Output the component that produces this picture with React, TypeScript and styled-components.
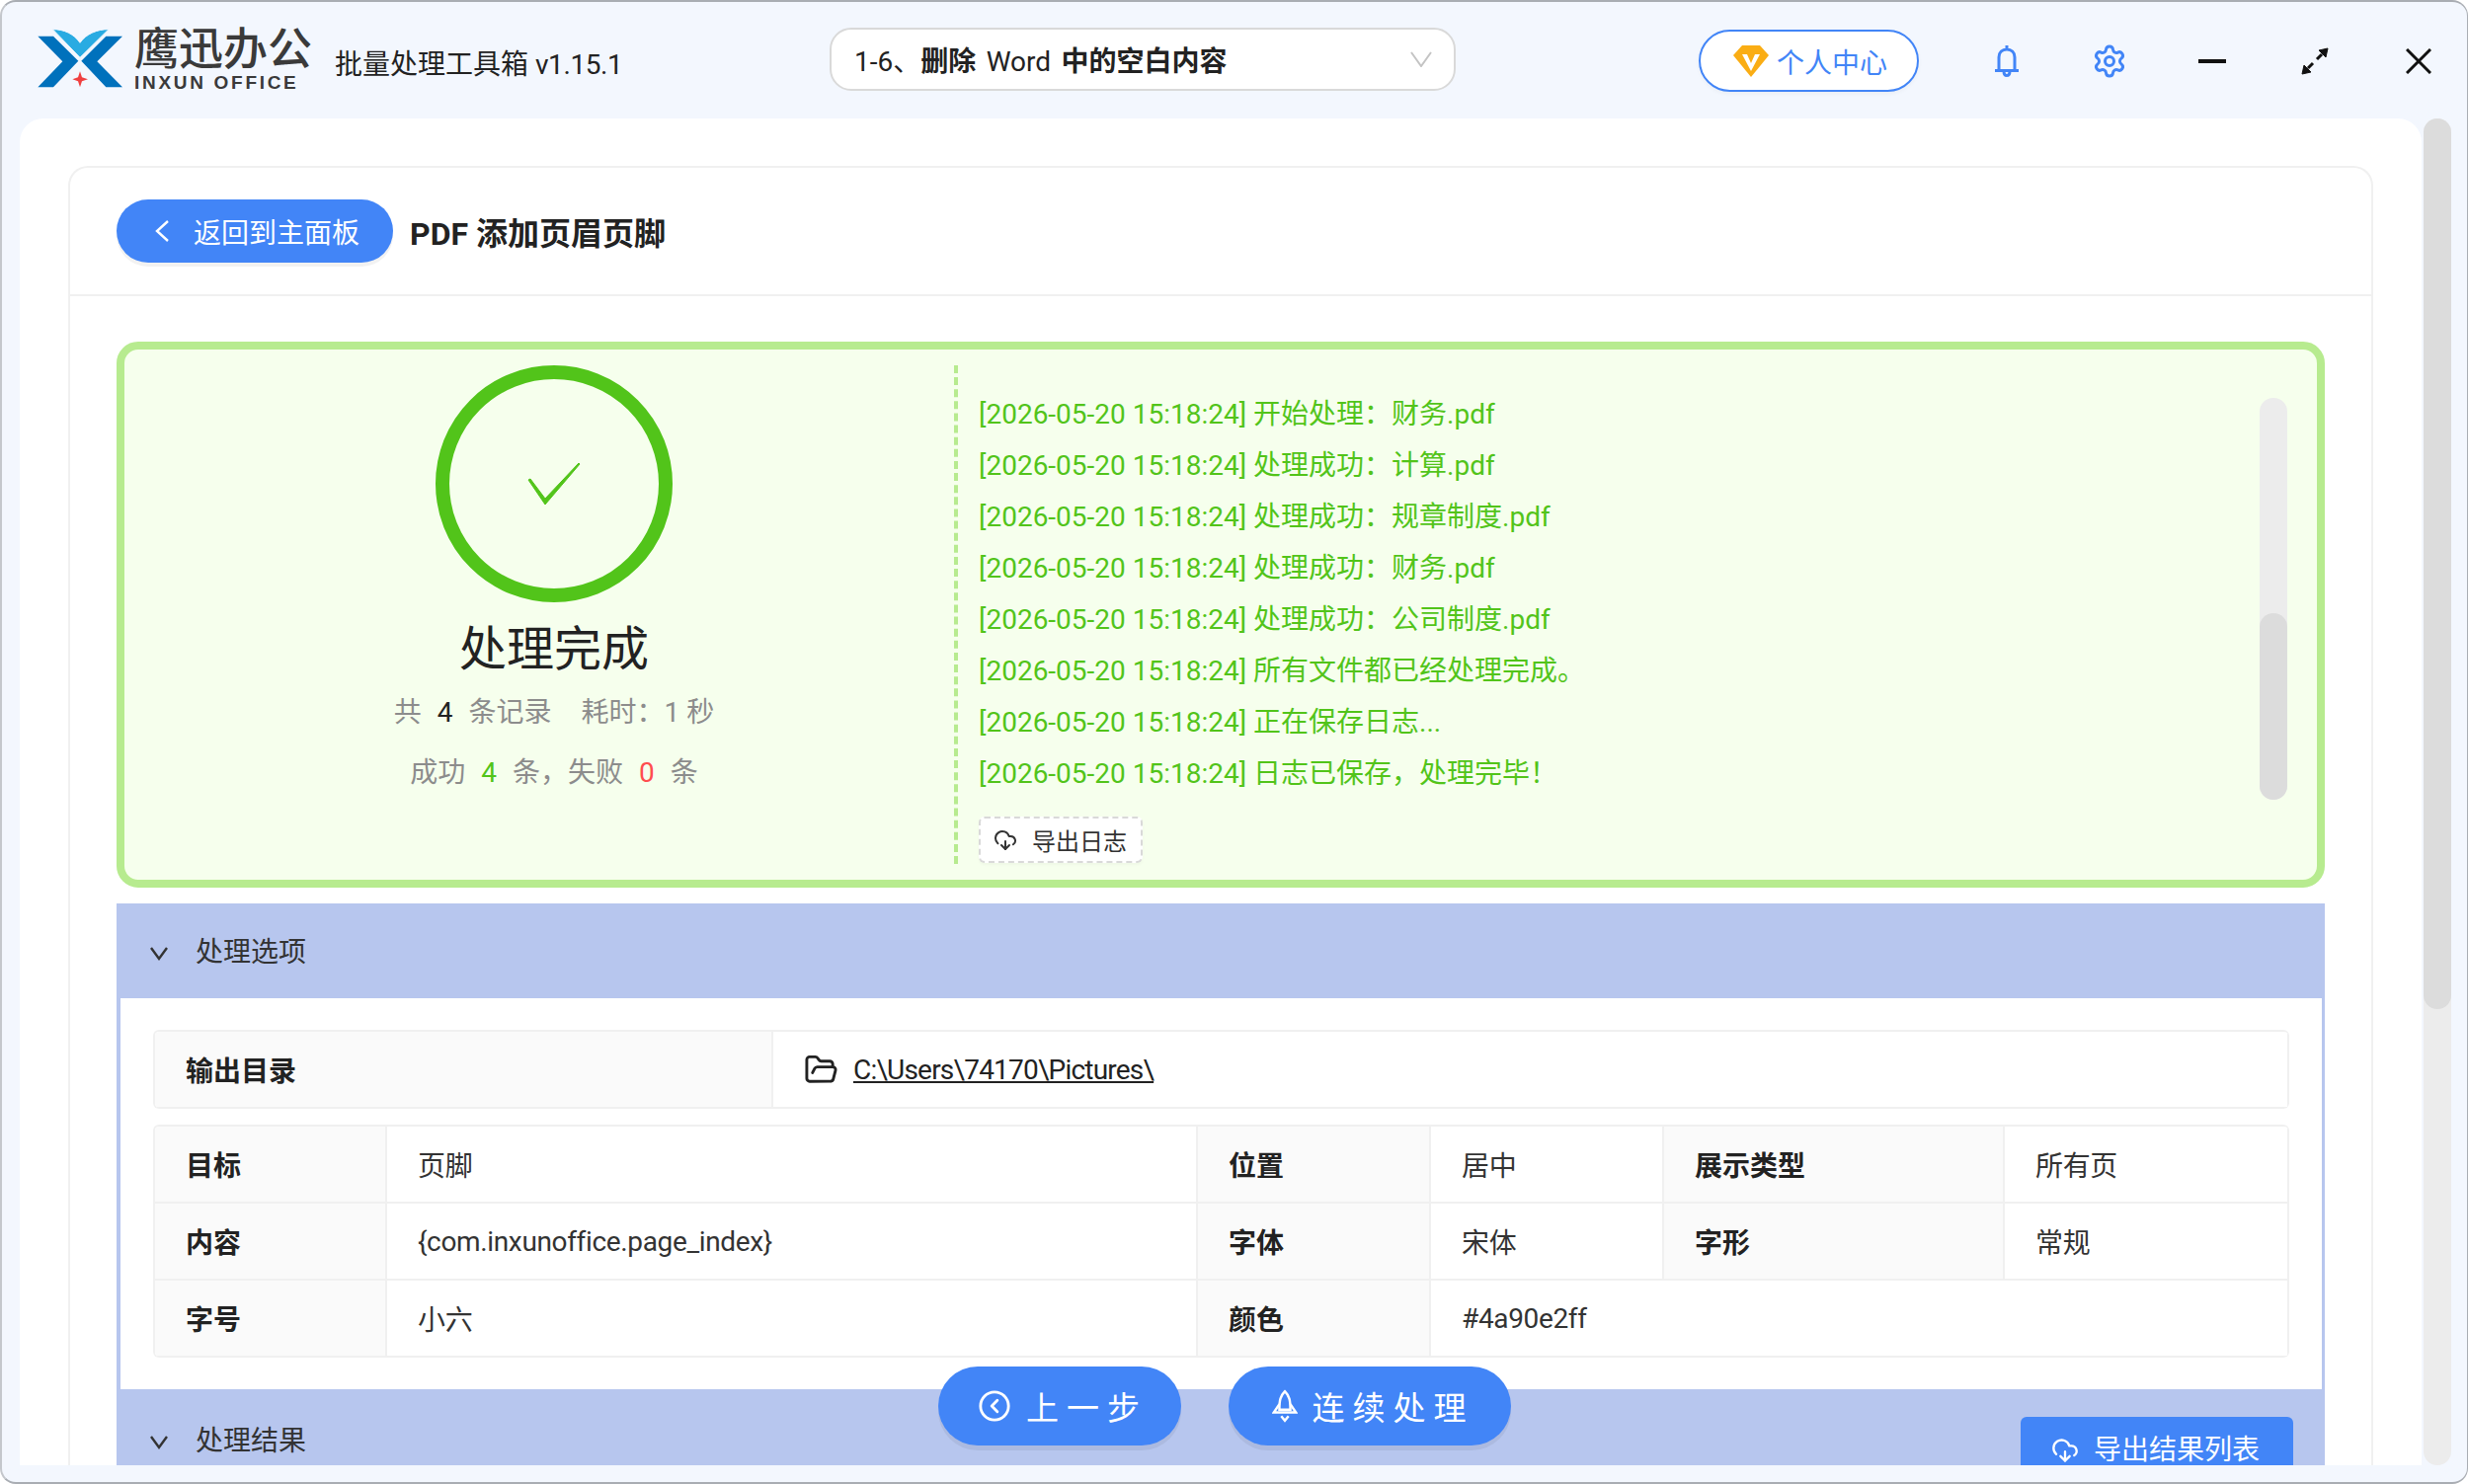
import React from "react";
import styled, { createGlobalStyle } from "styled-components";
import { CircleChevronLeft, CloudDownload, FolderOpen, Settings } from "lucide-react";

const FONT = `Roboto, "Noto Sans CJK SC", "Noto Sans", sans-serif`;
const BLUE = "#4285f7";
const GREEN = "#52c41a";
const LINE = "#f0f0f0";
const SECTION = "#b7c6ee";

const Global = createGlobalStyle`
  * { box-sizing: border-box; }
  html, body { margin: 0; padding: 0; background: #ffffff; }
  body { font-family: ${FONT}; font-size: 28px; color: #222; overflow: hidden; }
`;

const Frame = styled.div`
  width: 2499px;
  height: 1503px;
  background: #f3f7fe;
  border-top: 2px solid #a9adb3;
  border-left: 2px solid #c4c7cc;
  border-right: 1px solid #a9adb3;
  border-bottom: 2px solid #a9adb3;
  border-radius: 16px;
  overflow: hidden;
  display: flex;
  flex-direction: column;
`;

const Header = styled.header`
  height: 118px;
  flex: none;
  display: flex;
  align-items: center;
  padding-left: 35px;
  position: relative;
`;

const Brand = styled.div`
  display: flex;
  align-items: center;
  width: 803px;
  flex: none;
`;

const LogoMark = styled.svg`
  width: 100px;
  height: 70px;
  flex: none;
  margin-left: -7px;
  margin-top: -2px;
`;

const LogoText = styled.div`
  display: flex;
  flex-direction: column;
  margin-left: 6px;
  width: 203px;
  flex: none;
`;

const LogoCn = styled.div`
  font-size: 45px;
  line-height: 44px;
  font-weight: 500;
  color: #3a3a3a;
  white-space: nowrap;
`;

const LogoEn = styled.div`
  font-family: "Liberation Sans", sans-serif;
  font-size: 19px;
  line-height: 18px;
  font-weight: 700;
  color: #3a3a3a;
  letter-spacing: 2.7px;
  white-space: nowrap;
  margin-top: 2px;
`;

const Version = styled.div`
  font-size: 28px;
  line-height: 40px;
  color: #222;
  margin-top: 10px;
  white-space: nowrap;
`;

const VersionNo = styled.span`
  letter-spacing: -0.4px;
`;

const TaskSelect = styled.div`
  width: 634px;
  height: 64px;
  flex: none;
  background: #fff;
  border: 2px solid #d9d9d9;
  border-radius: 22px;
  display: flex;
  align-items: center;
  justify-content: space-between;
  padding: 0 22px 0 23px;
  font-size: 28px;
  word-spacing: 3.5px;
  margin-top: -2px;
`;

const TaskCjk = styled.span`
  font-weight: 700;
`;

const RightBar = styled.div`
  display: flex;
  align-items: center;
  margin-left: 246px;
  margin-top: 1px;
`;

const ProfileButton = styled.div`
  width: 223px;
  height: 63px;
  border: 2px solid ${BLUE};
  border-radius: 32px;
  background: #fff;
  color: ${BLUE};
  display: flex;
  align-items: center;
  padding-left: 33px;
  gap: 8px;
  font-size: 28px;
  box-shadow: 0 2px 4px rgba(0, 0, 0, 0.04);
`;

const IconSlot = styled.div<{ $w: number; $ml: number }>`
  width: ${(p) => p.$w}px;
  margin-left: ${(p) => p.$ml}px;
  display: flex;
  justify-content: center;
  align-items: center;
  flex: none;
`;

const Body = styled.div`
  flex: none;
  height: 1364px;
  display: flex;
  padding-left: 18px;
`;

const Panel = styled.main`
  width: 2432px;
  height: 100%;
  flex: none;
  background: #fff;
  border-radius: 24px 24px 0 0;
  padding: 48px 49px 0;
  overflow: hidden;
  position: relative;
`;

const Card = styled.section`
  border: 2px solid ${LINE};
  border-bottom: none;
  border-radius: 20px 20px 0 0;
  height: 1400px;
`;

const CardHead = styled.div`
  height: 130px;
  border-bottom: 2px solid ${LINE};
  display: flex;
  align-items: center;
  padding: 0 0 0 47px;
`;

const BackButton = styled.div`
  width: 280px;
  height: 64px;
  background: ${BLUE};
  border-radius: 32px;
  color: #fff;
  display: flex;
  align-items: center;
  padding-left: 38px;
  gap: 24px;
  font-size: 28px;
  box-shadow: 0 4px 0 #f2f2f2;
`;

const PageTitle = styled.h1`
  margin: 0 0 0 17px;
  font-size: 32px;
  font-weight: 700;
  color: #222;
`;

const CardBody = styled.div`
  padding: 46px 47px 0;
`;

const ResultBox = styled.div`
  height: 553px;
  background: #f6ffed;
  border: 8px solid #b7eb8f;
  border-radius: 22px;
  display: flex;
  padding: 16px 0;
`;

const SummaryCol = styled.div`
  width: 842px;
  flex: none;
  padding-left: 28px;
  display: flex;
  flex-direction: column;
  align-items: center;
`;

const Ring = styled.div`
  width: 240px;
  height: 240px;
  flex: none;
  border: 14px solid ${GREEN};
  border-radius: 50%;
  display: flex;
  align-items: center;
  justify-content: center;
`;

const DoneTitle = styled.div`
  margin-top: 12px;
  font-size: 48px;
  line-height: 72px;
  color: #222;
`;

const StatLine = styled.div<{ $mt: number }>`
  margin-top: ${(p) => p.$mt}px;
  font-size: 28px;
  line-height: 56px;
  color: #8c8c8c;
  white-space: nowrap;
`;

const Num = styled.span<{ $color: string }>`
  color: ${(p) => p.$color};
  margin: 0 16px;
`;

const Gap = styled.span`
  display: inline-block;
  width: 30px;
`;

const LogCol = styled.div`
  flex: 1;
  min-width: 0;
  border-left: 4px dashed #b7eb8f;
  margin-left: -2px;
  padding: 24px 30px 0 21px;
  display: flex;
  justify-content: space-between;
`;

const LogList = styled.div`
  display: flex;
  flex-direction: column;
  align-items: flex-start;
`;

const LogLine = styled.div`
  font-size: 28px;
  line-height: 52px;
  color: ${GREEN};
  white-space: nowrap;
`;

const ExportLog = styled.div`
  margin-top: 17px;
  width: 166px;
  height: 47px;
  border: 2px dashed #d9d9d9;
  border-radius: 6px;
  background: #fff;
  display: flex;
  align-items: center;
  padding-left: 13px;
  gap: 15px;
  font-size: 24px;
  color: #333;
  box-shadow: 0 2px 3px rgba(0, 0, 0, 0.03);
`;

const Track = styled.div`
  width: 28px;
  height: 407px;
  margin-top: 9px;
  background: #ececec;
  border-radius: 14px;
  position: relative;
  flex: none;
`;

const Thumb = styled.div<{ $top: number }>`
  position: absolute;
  left: 0;
  right: 0;
  top: ${(p) => p.$top}px;
  bottom: 0;
  background: #dcdcdc;
  border-radius: 14px;
`;

const SectionHead = styled.div<{ $top: number; $pad: number }>`
  margin-top: ${(p) => p.$top}px;
  height: 96px;
  background: ${SECTION};
  display: flex;
  align-items: flex-start;
  padding: ${(p) => p.$pad}px 21px 0 33px;
  font-size: 28px;
  line-height: 46px;
  color: #333;
  position: relative;
`;

const SectionIcon = styled.svg`
  width: 20px;
  height: 46px;
  margin-right: 27px;
  flex: none;
`;

const SectionBody = styled.div`
  border-left: 4px solid ${SECTION};
  border-right: 3px solid ${SECTION};
  padding: 32px 33px 32px 33px;
  background: #fff;
`;

const Table = styled.div<{ $cols: string; $mt?: number }>`
  display: grid;
  grid-template-columns: ${(p) => p.$cols};
  grid-auto-rows: 78px;
  margin-top: ${(p) => p.$mt ?? 0}px;
  border-top: 2px solid ${LINE};
  border-left: 2px solid ${LINE};
  border-radius: 6px;
  font-size: 28px;
  overflow: hidden;
`;

const Label = styled.div`
  background: #fafafa;
  font-weight: 700;
  display: flex;
  align-items: center;
  padding-left: 31px;
  border-right: 2px solid ${LINE};
  border-bottom: 2px solid ${LINE};
  color: #222;
`;

const Value = styled.div<{ $span?: number }>`
  grid-column: span ${(p) => p.$span ?? 1};
  display: flex;
  align-items: center;
  padding-left: 31px;
  border-right: 2px solid ${LINE};
  border-bottom: 2px solid ${LINE};
  color: #333;
  gap: 15px;
  letter-spacing: -0.35px;
`;

const PathLink = styled.span`
  text-decoration: underline;
  color: #222;
  letter-spacing: -0.8px;
`;

const ExportResults = styled.div`
  position: absolute;
  right: 32px;
  top: 28px;
  width: 276px;
  height: 68px;
  background: ${BLUE};
  border-radius: 6px;
  color: #fff;
  font-size: 28px;
  display: flex;
  align-items: center;
  padding-left: 31px;
  gap: 15px;
`;

const ActionBar = styled.div`
  position: absolute;
  left: 930px;
  top: 1264px;
  display: flex;
  gap: 48px;
`;

const ActionButton = styled.div<{ $w: number }>`
  width: ${(p) => p.$w}px;
  height: 80px;
  background: ${BLUE};
  border-radius: 40px;
  color: #fff;
  display: flex;
  align-items: center;
  justify-content: center;
  gap: 15px;
  padding-left: 6px;
  font-size: 33px;
  letter-spacing: 8px;
  box-shadow: 0 5px 0 rgba(0, 0, 0, 0.06);
`;

const PageScroll = styled.div`
  width: 28px;
  height: 100%;
  flex: none;
  margin-left: 2px;
  background: #ececec;
  border-radius: 14px;
  position: relative;
`;

const PageThumb = styled.div`
  position: absolute;
  left: 0;
  right: 0;
  top: 0;
  height: 902px;
  background: #dcdcdc;
  border-radius: 14px;
`;

const logs = [
  "开始处理：财务.pdf",
  "处理成功：计算.pdf",
  "处理成功：规章制度.pdf",
  "处理成功：财务.pdf",
  "处理成功：公司制度.pdf",
  "所有文件都已经处理完成。",
  "正在保存日志...",
  "日志已保存，处理完毕！",
];

const Chevron = () => (
  <SectionIcon viewBox="0 0 20 46">
    <path d="M2 18 L10 29 L18 18" fill="none" stroke="#333" strokeWidth="2.4" />
  </SectionIcon>
);

export default function App() {
  return (
    <>
      <Global />
      <Frame>
        <Header>
          <Brand>
            <LogoMark viewBox="0 0 300 210">
              <path d="M25 35H72L148 110L72 190H25L100 112Z" fill="#0071bc" />
              <path d="M282 35H232L157 110L232 190H282L205 112Z" fill="#0071bc" />
              <path d="M70 14C105 14 135 28 153 55C171 28 205 14 240 14L153 100Z" fill="#29abe2" stroke="#f3f7fe" strokeWidth="3" />
              <path d="M153 142L159 160L177 166L159 172L153 190L147 172L130 166L147 160Z" fill="#f04040" />
            </LogoMark>
            <LogoText>
              <LogoCn>鹰迅办公</LogoCn>
              <LogoEn>INXUN OFFICE</LogoEn>
            </LogoText>
            <Version>
              批量处理工具箱 <VersionNo>v1.15.1</VersionNo>
            </Version>
          </Brand>
          <TaskSelect>
            <span>
              1-6、<TaskCjk>删除</TaskCjk> Word <TaskCjk>中的空白内容</TaskCjk>
            </span>
            <svg width="22" height="16" viewBox="0 0 22 16">
              <path d="M1 1L11 15L21 1" fill="none" stroke="#c4c4c4" strokeWidth="2" />
            </svg>
          </TaskSelect>
          <RightBar>
            <ProfileButton>
              <svg width="36" height="32" viewBox="0 0 36 32">
                <path d="M9 0H27L36 10L18 32L0 10Z" fill="#faad14" />
                <path d="M9 9H14L18 18L22 9H27L18 26Z" fill="#fff" />
              </svg>
              个人中心
            </ProfileButton>
            <IconSlot $w={26} $ml={76}>
              <svg width="26" height="34" viewBox="0 0 26 34">
                <path d="M13 1V5M5 26V13C5 8 8.5 5 13 5C17.500 5 21 8 21 13V26M1 26.500H25M10 27C10 33 16 33 16 27" fill="none" stroke={BLUE} strokeWidth="3" />
              </svg>
            </IconSlot>
            <IconSlot $w={36} $ml={73}>
              <Settings size={36} color={BLUE} strokeWidth={2} />
            </IconSlot>
            <IconSlot $w={28} $ml={72}>
              <svg width="28" height="4" viewBox="0 0 28 4">
                <rect width="28" height="4" fill="#111" />
              </svg>
            </IconSlot>
            <IconSlot $w={28} $ml={76}>
              <svg width="28" height="28" viewBox="0 0 28 28">
                <path d="M27 1L18 3L25 10ZM1 27L10 25L3 18Z" fill="#111" stroke="#111" />
                <path d="M21 7L16 12M7 21L12 16" stroke="#111" strokeWidth="3" />
              </svg>
            </IconSlot>
            <IconSlot $w={26} $ml={78}>
              <svg width="26" height="26" viewBox="0 0 26 26">
                <path d="M1 1L25 25M25 1L1 25" stroke="#111" strokeWidth="3" />
              </svg>
            </IconSlot>
          </RightBar>
        </Header>
        <Body>
          <Panel>
            <Card>
              <CardHead>
                <BackButton>
                  <svg width="16" height="24" viewBox="0 0 16 24">
                    <path d="M14 2L3 12L14 22" fill="none" stroke="#fff" strokeWidth="2.4" />
                  </svg>
                  返回到主面板
                </BackButton>
                <PageTitle>PDF 添加页眉页脚</PageTitle>
              </CardHead>
              <CardBody>
                <ResultBox>
                  <SummaryCol>
                    <Ring>
                      <svg width="54" height="44" viewBox="0 0 54 44">
                        <path d="M1 18L3 17L18 37L52 1L53 2L18 43Z" fill={GREEN} stroke={GREEN} strokeWidth="1" />
                      </svg>
                    </Ring>
                    <DoneTitle>处理完成</DoneTitle>
                    <StatLine $mt={0}>
                      共<Num $color="#222">4</Num>条记录<Gap />耗时：1 秒
                    </StatLine>
                    <StatLine $mt={5}>
                      成功<Num $color={GREEN}>4</Num>条，失败<Num $color="#ff4d4f">0</Num>条
                    </StatLine>
                  </SummaryCol>
                  <LogCol>
                    <LogList>
                      {logs.map((t, i) => (
                        <LogLine key={i}>[2026-05-20 15:18:24] {t}</LogLine>
                      ))}
                      <ExportLog>
                        <CloudDownload size={24} color="#333" strokeWidth={2} />
                        导出日志
                      </ExportLog>
                    </LogList>
                    <Track>
                      <Thumb $top={218} />
                    </Track>
                  </LogCol>
                </ResultBox>
                <SectionHead $top={16} $pad={27}>
                  <Chevron />
                  处理选项
                </SectionHead>
                <SectionBody>
                  <Table $cols="626px 1fr">
                    <Label>输出目录</Label>
                    <Value>
                      <FolderOpen size={35} color="#222" strokeWidth={2} />
                      <PathLink>C:\Users\74170\Pictures\</PathLink>
                    </Value>
                  </Table>
                  <Table $cols="235px 821px 236px 236px 345px 1fr" $mt={16}>
                    <Label>目标</Label>
                    <Value>页脚</Value>
                    <Label>位置</Label>
                    <Value>居中</Value>
                    <Label>展示类型</Label>
                    <Value>所有页</Value>
                    <Label>内容</Label>
                    <Value>{"{com.inxunoffice.page_index}"}</Value>
                    <Label>字体</Label>
                    <Value>宋体</Value>
                    <Label>字形</Label>
                    <Value>常规</Value>
                    <Label>字号</Label>
                    <Value>小六</Value>
                    <Label>颜色</Label>
                    <Value $span={3}>#4a90e2ff</Value>
                  </Table>
                </SectionBody>
                <SectionHead $top={0} $pad={30}>
                  <Chevron />
                  处理结果
                  <ExportResults>
                    <CloudDownload size={28} color="#fff" strokeWidth={2} />
                    导出结果列表
                  </ExportResults>
                </SectionHead>
              </CardBody>
            </Card>
            <ActionBar>
              <ActionButton $w={246}>
                <CircleChevronLeft size={34} color="#fff" strokeWidth={2} />
                上一步
              </ActionButton>
              <ActionButton $w={286}>
                <svg width="26" height="34" viewBox="0 0 28 36">
                  <path d="M14 2C19 7 20 12 20 22H8C8 12 9 7 14 2Z" fill="none" stroke="#fff" strokeWidth="2.6" />
                  <path d="M8 16L2 25H26L20 16M10 29L14 34L18 29" fill="none" stroke="#fff" strokeWidth="2.6" />
                </svg>
                连续处理
              </ActionButton>
            </ActionBar>
          </Panel>
          <PageScroll>
            <PageThumb />
          </PageScroll>
        </Body>
      </Frame>
    </>
  );
}
